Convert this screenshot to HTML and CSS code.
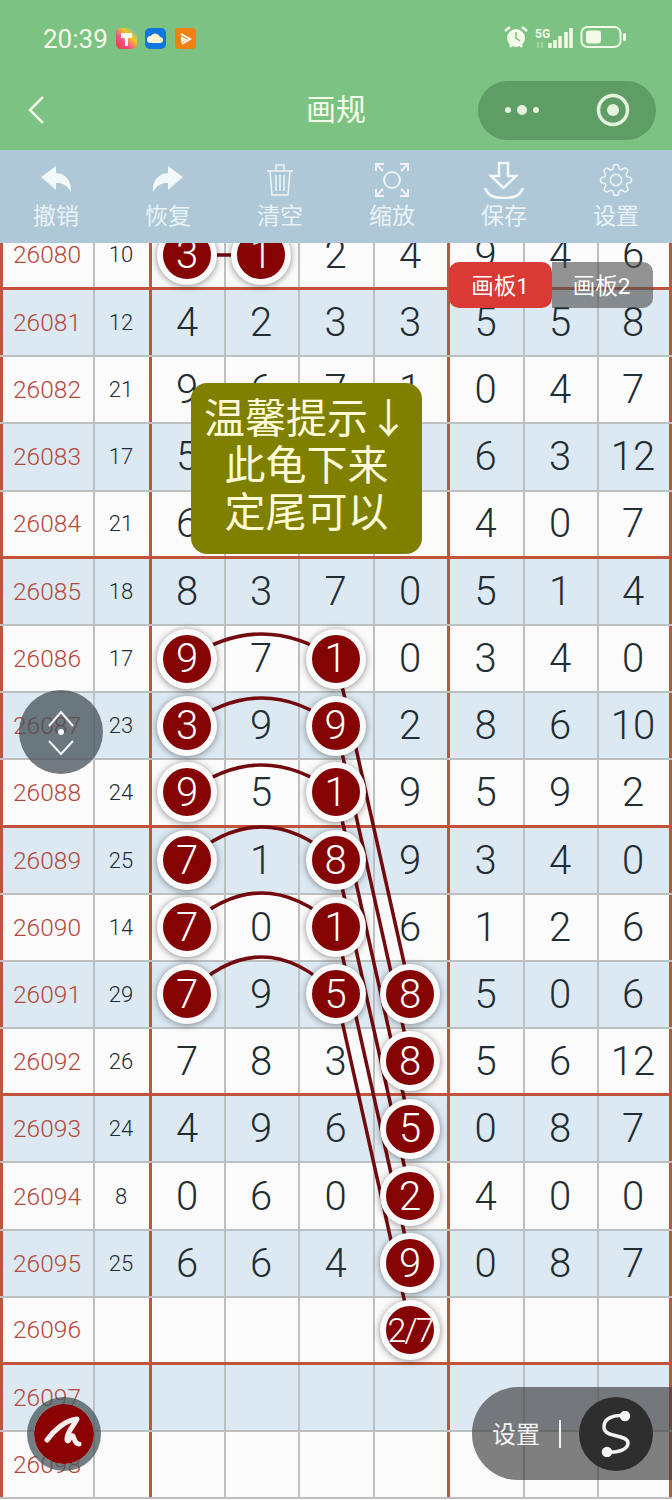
FILE: index.html
```html
<!DOCTYPE html>
<html lang="zh">
<head>
<meta charset="utf-8">
<title>画规</title>
<link rel="stylesheet" href="styles.css">
</head>
<body>
<div class="page">
  <header class="head">
    <div class="status">
      <span class="time">20:39</span>
      <svg class="apps" width="82" height="24" viewBox="0 0 82 24">
        <defs><linearGradient id="ga" x1="0" y1="1" x2="1" y2="0"><stop offset="0" stop-color="#e8402c"/><stop offset=".35" stop-color="#f0508a"/><stop offset=".65" stop-color="#f5c623"/><stop offset="1" stop-color="#35c4e0"/></linearGradient></defs>
        <rect x="0" y="2" width="21" height="21" rx="5" fill="url(#ga)"/>
        <path d="M5 7h11v5h-4v8h-3v-8H5z" fill="#fff"/>
        <rect x="29" y="2" width="21" height="21" rx="5" fill="#1177e0"/>
        <path d="M34 17a3.500 3.500 0 0 1 1-7 5 5 0 0 1 9 1 3 3 0 0 1 0 6z" fill="#fff3d0"/>
        <rect x="59" y="2" width="21" height="21" rx="4" fill="#f08010"/>
        <path d="M65 8l9 5-8 5M66 12l3 1.500-3 1.500z" fill="none" stroke="#fff" stroke-width="2"/>
      </svg>
      <span class="grow"></span>
      <svg class="sys" width="74" height="26" viewBox="0 0 74 26">
        <circle cx="12" cy="14" r="9" fill="#f3fbe8"/>
        <path d="M12 8v6l4 3" stroke="#7bc283" stroke-width="1.500" fill="none"/>
        <path d="M1 7l5-4M23 7l-5-4M6 23l2-3M18 23l-2-3" stroke="#f3fbe8" stroke-width="2.500"/>
        <text class="fiveg" x="31" y="14">5G</text>
        <path d="M34 18v6M38 18v6" stroke="#cfe8c8" stroke-width="1"/>
        <path d="M46 19v5M51 16v8M56 12v12M62 8v16M67 4v20" stroke="#f3fbe8" stroke-width="3.500"/>
      </svg>
      <svg class="batt" width="48" height="24" viewBox="0 0 48 24">
        <rect x="1.500" y="2" width="39" height="20" rx="6" fill="none" stroke="#f3fbe8" stroke-width="2"/>
        <rect x="6" y="5.500" width="15" height="13" rx="3" fill="#f3fbe8"/>
        <rect x="43" y="8" width="3" height="8" rx="1.500" fill="#f3fbe8"/>
      </svg>
    </div>
    <nav class="nav">
      <svg class="back" width="20" height="30" viewBox="0 0 20 30"><path d="M17 2L4 15l13 13" fill="none" stroke="#f3fbe8" stroke-width="2.500"/></svg>
      <h1 class="title">画规</h1>
      <div class="capsule">
        <svg width="38" height="14" viewBox="0 0 38 14"><circle cx="5" cy="7" r="3" fill="#e4f3dc"/><circle cx="19" cy="7" r="5" fill="#e4f3dc"/><circle cx="33" cy="7" r="3" fill="#e4f3dc"/></svg>
        <svg width="36" height="36" viewBox="0 0 36 36"><circle cx="18" cy="18" r="14.500" fill="none" stroke="#e4f3dc" stroke-width="3.500"/><circle cx="18" cy="18" r="6" fill="#e4f3dc"/></svg>
      </div>
    </nav>
  </header>

  <div class="tools">
    <div class="tool">
      <svg class="ti" width="36" height="36" viewBox="0 0 36 36"><path d="M3 15L18 4v7c10 0 16 9 15 19-4-7-8-9-15-9v7z" fill="#f2f7fa"/></svg>
      <span>撤销</span>
    </div>
    <div class="tool">
      <svg class="ti" width="36" height="36" viewBox="0 0 36 36"><path d="M33 15L18 4v7C8 11 2 20 3 30c4-7 8-9 15-9v7z" fill="#f2f7fa"/></svg>
      <span>恢复</span>
    </div>
    <div class="tool">
      <svg class="ti" width="36" height="36" viewBox="0 0 36 36" fill="none" stroke="#eef4f7" stroke-width="1.500"><path d="M5 9h26M14 9V3h8v6M8 9l2 24h16l2-24M14 13v16M18 13v16M22 13v16"/></svg>
      <span>清空</span>
    </div>
    <div class="tool">
      <svg class="ti" width="36" height="36" viewBox="0 0 36 36" fill="none" stroke="#eef4f7" stroke-width="2"><circle cx="18" cy="18" r="8"/><path d="M2 9V2h8M3 3l6 6M34 9V2h-8M33 3l-6 6M2 27v7h8M3 33l6-6M34 27v7h-8M33 33l-6-6"/></svg>
      <span>缩放</span>
    </div>
    <div class="tool">
      <svg class="ti" width="42" height="38" viewBox="0 0 42 38" fill="none" stroke="#f2f7fa" stroke-width="2.500"><path d="M16 2h9v13h8L20.500 27 8 15h8z"/><path d="M2 27c3 8 9 10 19 10s16-2 19-10"/></svg>
      <span>保存</span>
    </div>
    <div class="tool">
      <svg class="ti" width="34" height="34" viewBox="0 0 24 24" fill="none" stroke="#eef4f7" stroke-width="1.100"><circle cx="12" cy="12" r="4"/><path d="M19.400 15a1.650 1.650 0 0 0 .33 1.820l.06.06a2 2 0 0 1 0 2.830 2 2 0 0 1-2.830 0l-.06-.06a1.650 1.650 0 0 0-1.820-.33 1.650 1.650 0 0 0-1 1.510V21a2 2 0 0 1-2 2 2 2 0 0 1-2-2v-.09A1.650 1.650 0 0 0 9 19.400a1.650 1.650 0 0 0-1.820.33l-.06.06a2 2 0 0 1-2.830 0 2 2 0 0 1 0-2.830l.06-.06a1.650 1.650 0 0 0 .33-1.820 1.650 1.650 0 0 0-1.510-1H3a2 2 0 0 1-2-2 2 2 0 0 1 2-2h.09A1.650 1.650 0 0 0 4.600 9a1.650 1.650 0 0 0-.33-1.820l-.06-.06a2 2 0 0 1 0-2.830 2 2 0 0 1 2.830 0l.06.06a1.650 1.650 0 0 0 1.820.33H9a1.650 1.650 0 0 0 1-1.510V3a2 2 0 0 1 2-2 2 2 0 0 1 2 2v.09a1.650 1.650 0 0 0 1 1.510 1.650 1.650 0 0 0 1.820-.33l.06-.06a2 2 0 0 1 2.830 0 2 2 0 0 1 0 2.830l-.06.06a1.650 1.650 0 0 0-.33 1.820V9a1.650 1.650 0 0 0 1.510 1H21a2 2 0 0 1 2 2 2 2 0 0 1-2 2h-.09a1.650 1.650 0 0 0-1.510 1z"/></svg>
      <span>设置</span>
    </div>
  </div>

  <main class="board">
    <div class="rows">
      <div class="row thick"><i>26080</i><u>10</u><b><em>3</em></b><b><em>1</em></b><b>2</b><b>4</b><b>9</b><b>4</b><b>6</b></div>
      <div class="row alt"><i>26081</i><u>12</u><b>4</b><b>2</b><b>3</b><b>3</b><b>5</b><b>5</b><b>8</b></div>
      <div class="row"><i>26082</i><u>21</u><b>9</b><b>6</b><b>7</b><b>1</b><b>0</b><b>4</b><b>7</b></div>
      <div class="row alt"><i>26083</i><u>17</u><b>5</b><b>2</b><b>9</b><b>1</b><b>6</b><b>3</b><b>12</b></div>
      <div class="row thick"><i>26084</i><u>21</u><b>6</b><b>3</b><b>5</b><b>8</b><b>4</b><b>0</b><b>7</b></div>
      <div class="row alt"><i>26085</i><u>18</u><b>8</b><b>3</b><b>7</b><b>0</b><b>5</b><b>1</b><b>4</b></div>
      <div class="row"><i>26086</i><u>17</u><b><em>9</em></b><b>7</b><b><em>1</em></b><b>0</b><b>3</b><b>4</b><b>0</b></div>
      <div class="row alt"><i>26087</i><u>23</u><b><em>3</em></b><b>9</b><b><em>9</em></b><b>2</b><b>8</b><b>6</b><b>10</b></div>
      <div class="row thick"><i>26088</i><u>24</u><b><em>9</em></b><b>5</b><b><em>1</em></b><b>9</b><b>5</b><b>9</b><b>2</b></div>
      <div class="row alt"><i>26089</i><u>25</u><b><em>7</em></b><b>1</b><b><em>8</em></b><b>9</b><b>3</b><b>4</b><b>0</b></div>
      <div class="row"><i>26090</i><u>14</u><b><em>7</em></b><b>0</b><b><em>1</em></b><b>6</b><b>1</b><b>2</b><b>6</b></div>
      <div class="row alt"><i>26091</i><u>29</u><b><em>7</em></b><b>9</b><b><em>5</em></b><b><em>8</em></b><b>5</b><b>0</b><b>6</b></div>
      <div class="row thick"><i>26092</i><u>26</u><b>7</b><b>8</b><b>3</b><b><em>8</em></b><b>5</b><b>6</b><b>12</b></div>
      <div class="row alt"><i>26093</i><u>24</u><b>4</b><b>9</b><b>6</b><b><em>5</em></b><b>0</b><b>8</b><b>7</b></div>
      <div class="row"><i>26094</i><u>8</u><b>0</b><b>6</b><b>0</b><b><em>2</em></b><b>4</b><b>0</b><b>0</b></div>
      <div class="row alt"><i>26095</i><u>25</u><b>6</b><b>6</b><b>4</b><b><em>9</em></b><b>0</b><b>8</b><b>7</b></div>
      <div class="row thick"><i>26096</i><u></u><b></b><b></b><b></b><b><em class="small">2/7</em></b><b></b><b></b><b></b></div>
      <div class="row alt"><i>26097</i><u></u><b></b><b></b><b></b><b></b><b></b><b></b><b></b></div>
      <div class="row"><i>26098</i><u></u><b></b><b></b><b></b><b></b><b></b><b></b><b></b></div>
    </div>
  </main>

  <svg class="links" width="672" height="1500" viewBox="0 0 672 1500" fill="none" stroke="#720a0e" stroke-width="3.500">
    <path d="M187 255H262"/>
    <path d="M187 659Q262 609 336 659"/>
    <path d="M187 726Q262 670 336 726"/>
    <path d="M187 793Q262 737 336 793"/>
    <path d="M187 860Q262 794 336 860"/>
    <path d="M187 927Q262 859 336 927"/>
    <path d="M187 994Q262 920 336 994"/>
    <path d="M336 659L411 994"/>
    <path d="M336 726L411 1062"/>
    <path d="M336 793L411 1129"/>
    <path d="M336 860L411 1196"/>
    <path d="M336 927L411 1263"/>
    <path d="M336 994L411 1330"/>
  </svg>

  <div class="tabs">
    <span class="tab on">画板1</span>
    <span class="tab">画板2</span>
  </div>

  <div class="tip">温馨提示↓<br>此龟下来<br>定尾可以</div>

  <div class="updown">
    <svg width="40" height="50" viewBox="0 0 40 50" fill="none" stroke="#f4f6f7" stroke-width="2"><path d="M8 19L20 5l12 14M8 34l12 13 12-13"/><circle cx="20" cy="25" r="3" fill="#f4f6f7" stroke="none"/></svg>
  </div>

  <div class="pen">
    <svg width="44" height="44" viewBox="0 0 44 44" fill="none" stroke="#fbeeee" stroke-width="5" stroke-linecap="round" stroke-linejoin="round"><path d="M5 28C12 18 24 8 35 7 32 14 24 20 25 28c1 4 4-6 6-4 2 4 2 8 6 8"/></svg>
  </div>

  <div class="panel">
    <span class="plabel">设置</span>
    <span class="pbar"></span>
    <span class="pround">
      <svg width="46" height="46" viewBox="0 0 46 46" fill="none" stroke="#f4f4f4" stroke-width="3.500" stroke-linecap="round"><path d="M32 5C20 3 10 8 11 17c1 10 24 6 24 15 0 7-11 10-21 9"/><circle cx="32" cy="5" r="3.500" fill="#f4f4f4"/><circle cx="14" cy="41" r="3.500" fill="#f4f4f4"/></svg>
    </span>
  </div>
</div>
</body>
</html>
```

FILE: styles.css
```css
* { box-sizing: border-box; }
html, body { margin: 0; padding: 0; }
body {
  background: #fbfbfb;
  font-family: Roboto, "Noto Sans CJK SC", sans-serif;
}
.page { position: relative; width: 672px; height: 1500px; overflow: hidden; }

.head { background: #7bc283; height: 150px; color: #f3fbe8; }
.status { height: 70px; padding: 22px 44px 0 43px; display: flex; align-items: flex-start; }
.time { font-size: 26px; line-height: 34px; width: 73px; }
.apps { margin-top: 4px; }
.grow { flex: 1; }
.sys { margin-top: 2px; }
.batt { margin: 3px 0 0 2px; }
.fiveg { font-size: 12px; fill: #f3fbe8; font-weight: 700; }
.nav { height: 80px; padding: 0 16px 0 26px; display: grid; grid-template-columns: 168px 1fr 178px; align-items: center; }
.title { margin: 0; font-size: 30px; font-weight: 400; line-height: 40px; text-align: center; }
.capsule {
  width: 178px; height: 59px; border-radius: 30px; background: #5f9d66;
  display: flex; align-items: center; justify-content: space-between; padding: 0 25px;
}

.tools { height: 93px; background: #aec8d7; display: flex; }
.tool { flex: 1; display: flex; flex-direction: column; align-items: center; color: #eaf2f6; font-size: 23px; line-height: 30px; }
.ti { height: 38px; margin-top: 11px; flex: none; }
.tool span { margin-top: 3px; }

.board { height: 1257px; overflow: hidden; }
.rows { margin-top: -20.2px; }
.row {
  height: 67.2px; display: grid;
  grid-template-columns: 95px 57px 74px 74px 75px 75px 75px 74px 73px;
  border-bottom: 2px solid #bdc0c0;
  background: #fbfbfb;
}
.row.alt { background: #dce9f3; }
.row.thick { border-bottom: 3px solid #c0533a; }
.row > * {
  display: flex; align-items: center; justify-content: center;
  font-style: normal; text-decoration: none; font-weight: 300; color: #222c33;
  border-right: 2px solid #bdc0c0;
  padding-right: 2px;
}
.row i { font-size: 24.500px; color: #b5483a; font-weight: 300; border-left: 3px solid #b9573f; }
.row u { font-size: 22px; font-weight: 300; border-right: 3px solid #b9573f; }
.row b { font-size: 40px; }
.row b:nth-of-type(4), .row b:last-child { border-right: 3px solid #b9573f; }
.row em {
  position: relative; z-index: 2; flex: none;
  width: 60px; height: 60px; border-radius: 50%;
  border: 6px solid #fbfbfb; background: #860303; color: #fff;
  box-shadow: 0 1px 7px rgba(0, 0, 0, .45);
  display: flex; align-items: center; justify-content: center;
  font-style: normal; font-size: 40px; font-weight: 300;
}
.row em.small { font-size: 34px; letter-spacing: -2px; overflow: hidden; white-space: nowrap; }

.links { position: absolute; left: 0; top: 0; z-index: 1; pointer-events: none; clip-path: inset(243px 0 0 0); }

.tabs { position: absolute; z-index: 3; left: 449px; top: 262px; width: 204px; height: 46px; display: flex; }
.tab {
  flex: 1; display: flex; align-items: center; justify-content: center; padding: 0 2px 3px 0;
  font-size: 22.500px; color: #fff; background: rgba(80, 80, 80, .62); border-radius: 0 10px 10px 0;
}
.tab.on { flex: none; width: 103px; padding-right: 1px; background: #d93a35; border-radius: 10px; }

.tip {
  position: absolute; z-index: 3; left: 191px; top: 383px; width: 231px; height: 171px;
  background: #808000; border-radius: 16px; color: #fdfbd8;
  font-size: 41px; line-height: 47px; text-align: center; padding-top: 13px; white-space: nowrap;
}

.updown {
  position: absolute; z-index: 3; left: 19px; top: 690px; width: 84px; height: 84px; border-radius: 50%;
  background: rgba(70, 80, 88, .75); display: flex; align-items: center; justify-content: center;
}
.pen {
  position: absolute; z-index: 3; left: 27px; top: 1397px; width: 74px; height: 74px; border-radius: 50%;
  background: #8b0000; border: 7px solid rgba(70, 85, 90, .75); background-clip: padding-box;
  display: flex; align-items: center; justify-content: center;
}
.panel {
  position: absolute; z-index: 3; left: 472px; top: 1387px; width: 200px; height: 93px;
  background: rgba(60, 60, 60, .65); border-radius: 46px 0 0 46px;
  display: flex; align-items: center; padding-left: 20px;
}
.plabel { font-size: 24px; color: #f4f4f4; width: 48px; padding-bottom: 3px; white-space: nowrap; }
.pbar { width: 2px; height: 28px; background: #f4f4f4; margin-left: 19px; }
.pround {
  width: 74px; height: 74px; border-radius: 50%; background: #2e2e2e; margin-left: 18px;
  display: flex; align-items: center; justify-content: center;
}
```
